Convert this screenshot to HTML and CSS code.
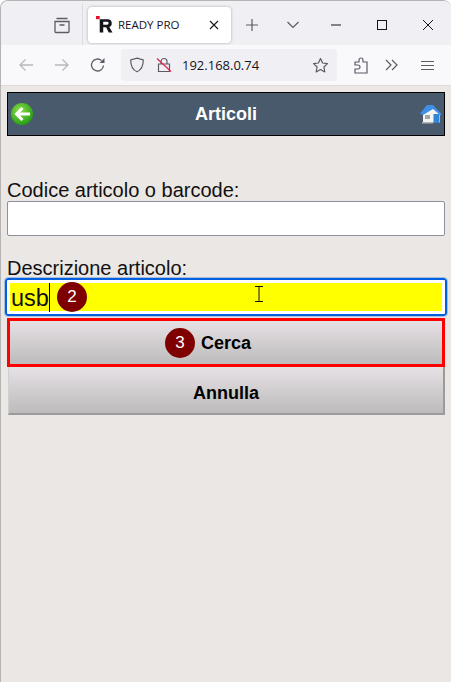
FILE: index.html
```html
<!DOCTYPE html>
<html lang="it">
<head>
  <meta charset="UTF-8">
  <title>READY PRO</title>
  <link rel="stylesheet" href="styles.css">
</head>
<body>
  <div class="window">
    <!-- barra delle schede -->
    <div class="tabbar">
      <div class="tabbar-left">
        <svg class="icon" width="18" height="18" viewBox="0 0 18 18"><path d="M3.500 2.500h11M2 5.500h14v10a1 1 0 0 1-1 1H3a1 1 0 0 1-1-1zM6.500 9h5" fill="none" stroke="#5b5b66" stroke-width="1.300"/></svg>
      </div>
      <div class="tab">
        <svg class="tab-logo" width="17" height="17" viewBox="0 0 16 16"><rect x="0" y="0" width="3.500" height="3" fill="#e8112d"/><path d="M3.500 3h7.500a3.800 3.800 0 0 1 1.500 7.300L15.500 15.500h-3.500l-2.500-4.800H6.800v4.800H3.500zM6.800 5.500v2.800h3.700a1.400 1.400 0 0 0 0-2.800z" fill="#15141a"/></svg>
        <span class="tab-title">READY PRO</span>
        <svg class="tab-close" width="10" height="10" viewBox="0 0 10 10"><path d="M1 1l8 8M9 1l-8 8" stroke="#15141a" stroke-width="1.100"/></svg>
      </div>
      <svg class="tab-new" width="14" height="14" viewBox="0 0 14 14"><path d="M7 1v12M1 7h12" stroke="#5b5b66" stroke-width="1.200"/></svg>
      <svg class="tab-list" width="14" height="10" viewBox="0 0 14 10"><path d="M1.500 2l5.500 5.500L12.500 2" fill="none" stroke="#5b5b66" stroke-width="1.200"/></svg>
      <div class="win-controls">
        <svg width="12" height="12" viewBox="0 0 12 12"><path d="M1 6h10" stroke="#15141a" stroke-width="1"/></svg>
        <svg width="12" height="12" viewBox="0 0 12 12"><rect x="1.500" y="1.500" width="9" height="9" fill="none" stroke="#15141a" stroke-width="1"/></svg>
        <svg width="12" height="12" viewBox="0 0 12 12"><path d="M1 1l10 10M11 1L1 11" stroke="#15141a" stroke-width="1"/></svg>
      </div>
    </div>

    <!-- barra di navigazione -->
    <div class="toolbar">
      <svg class="nav-btn" width="16" height="16" viewBox="0 0 16 16"><path d="M15 8H2M7.500 2.500L2 8l5.500 5.500" fill="none" stroke="#b8b8bd" stroke-width="1.300"/></svg>
      <svg class="nav-btn" width="16" height="16" viewBox="0 0 16 16"><path d="M1 8h13M8.500 2.500L14 8l-5.500 5.500" fill="none" stroke="#b8b8bd" stroke-width="1.300"/></svg>
      <svg class="nav-btn" width="16" height="16" viewBox="0 0 16 16"><path d="M13.500 8.500a6 6 0 1 1-2-5" fill="none" stroke="#5b5b66" stroke-width="1.300"/><path d="M14.500 1v5h-5z" fill="#5b5b66"/></svg>
      <div class="urlbar">
        <svg width="16" height="16" viewBox="0 0 16 16"><path d="M8 1.200l6.300 1.800c0 6-1.800 9.800-6.300 11.800C3.500 12.800 1.700 9 1.700 3z" fill="none" stroke="#5b5b66" stroke-width="1.200"/></svg>
        <svg width="16" height="16" viewBox="0 0 16 16"><path d="M5 7V4.500a3 3 0 0 1 6 0V7M2.500 7h11v7.500h-11z" fill="none" stroke="#5b5b66" stroke-width="1.200"/><path d="M1 1.500l14 13" stroke="#e22850" stroke-width="1.300"/></svg>
        <span class="url">192.168.0.74</span>
        <svg class="url-star" width="17" height="17" viewBox="0 0 17 17"><path d="M8.500 1.500l2.100 4.500 4.900.6-3.600 3.400.9 4.900-4.300-2.400-4.300 2.400.9-4.900L1.500 6.600 6.400 6z" fill="none" stroke="#5b5b66" stroke-width="1.200" stroke-linejoin="round"/></svg>
      </div>
      <div class="toolbar-right">
        <svg width="15" height="17" viewBox="0 0 15 17"><path d="M1 5h4V3a2 2 0 0 1 4 0v2h4v11H1v-4h3a2 2 0 0 0 0-4H1z" fill="none" stroke="#5b5b66" stroke-width="1.200"/></svg>
        <svg width="14" height="12" viewBox="0 0 14 12"><path d="M1 1l5 5-5 5M7 1l5 5-5 5" fill="none" stroke="#5b5b66" stroke-width="1.200"/></svg>
        <svg class="menu-icon" width="13" height="11" viewBox="0 0 13 11"><path d="M0 1.500h13M0 5.500h13M0 9.500h13" stroke="#5b5b66" stroke-width="1.200"/></svg>
      </div>
    </div>

    <!-- contenuto della pagina -->
    <div class="page">
      <div class="header">
        <svg class="header-back" width="24" height="24" viewBox="0 0 24 24">
          <defs><radialGradient id="verde" cx="40%" cy="35%" r="70%"><stop offset="0" stop-color="#8fe04a"/><stop offset="1" stop-color="#1f9a12"/></radialGradient></defs>
          <circle cx="12" cy="12" r="11" fill="url(#verde)"/>
          <path d="M20 12H7M12.500 6L6.500 12l6 6" fill="none" stroke="#fff" stroke-width="3"/>
        </svg>
        <span class="header-title">Articoli</span>
        <svg class="header-home" width="22" height="20" viewBox="0 0 22 20">
          <path d="M3 10l9-7 8 7v8.500H3z" fill="#f4f4f0"/>
          <path d="M0 9.500L7 1h6l8.500 9-1 1.500L13 5 3 11z" fill="#3f8fe6"/>
          <rect x="5" y="11" width="5" height="4" fill="#a5a5a5"/>
          <rect x="13.500" y="10" width="6" height="9" fill="#2f86d8"/>
          <path d="M2 18h11v1.500H2z" fill="#b5b5b0"/>
        </svg>
      </div>

      <div class="field field-code">
        <label class="field-label">Codice articolo o barcode:</label>
        <div class="text-input"></div>
      </div>

      <div class="field field-desc">
        <label class="field-label">Descrizione articolo:</label>
        <div class="text-input-focus">
          <div class="text-input-value">usb<span class="caret"></span></div>
          <span class="step step-2">2</span>
          <svg class="ibeam" width="8" height="16" viewBox="0 0 8 16"><path d="M0 .5h8M0 15.500h8M4 .5v15" stroke="#111" stroke-width="1"/></svg>
        </div>
      </div>

      <div class="btn btn-search">
        <span class="step step-3">3</span>
        <span>Cerca</span>
      </div>
      <div class="btn btn-cancel">Annulla</div>
    </div>
  </div>
</body>
</html>
```

FILE: styles.css
```css
* {
  box-sizing: border-box;
}

html,
body {
  margin: 0;
  padding: 0;
  height: 100%;
  overflow: hidden;
}

body {
  font-family: "Liberation Sans", Arial, sans-serif;
  background-color: #ffffff;
}

.window {
  display: flex;
  flex-direction: column;
  height: 682px;
  border-left: 1px solid #b4b4b4;
  border-top: 1px solid #b4b4b4;
  border-radius: 8px 8px 0 0;
  overflow: hidden;
}

.tabbar {
  display: flex;
  align-items: center;
  height: 44px;
  flex: none;
  background-color: #f0f0f4;
  padding-top: 3px;
}

.tabbar-left {
  display: flex;
  align-items: center;
  justify-content: flex-end;
  width: 82px;
  height: 41px;
  padding-right: 11px;
  border-right: 1px solid #dcdce0;
}

.tab {
  display: flex;
  align-items: center;
  width: 143px;
  height: 36px;
  margin-left: 5px;
  padding: 0 0 0 8px;
  background-color: #ffffff;
  border-radius: 4px;
  box-shadow: 0 0 3px rgba(0, 0, 0, 0.3);
}

.tab-title {
  margin-left: 5px;
  font-family: "Open Sans", sans-serif;
  font-size: 11.500px;
  color: #15141a;
  white-space: nowrap;
}

.tab-close {
  margin-left: 30px;
}

.tab-new {
  margin-left: 14px;
}

.tab-list {
  margin-left: 27px;
}

.win-controls {
  display: flex;
  align-items: center;
  gap: 34px;
  margin-left: 30px;
}

.toolbar {
  display: flex;
  align-items: center;
  height: 41px;
  flex: none;
  padding-left: 17px;
  background-color: #f9f9fb;
  border-bottom: 1px solid #dedbd8;
}

.nav-btn {
  margin-right: 20px;
}

.urlbar {
  display: flex;
  align-items: center;
  gap: 10.500px;
  width: 216px;
  height: 32px;
  margin-left: -5px;
  padding: 0 8px;
  background-color: #f0f0f4;
  border-radius: 4px;
}

.url {
  font-family: "Open Sans", sans-serif;
  font-size: 13px;
  color: #15141a;
  white-space: nowrap;
}

.url-star {
  margin-left: auto;
}

.toolbar-right {
  display: flex;
  align-items: center;
  gap: 16px;
  margin-left: 17px;
}

.menu-icon {
  margin-left: 6px;
}

.page {
  flex: 1;
  padding: 6px 6px 0 6px;
  background-color: #ebe7e4;
}

.header {
  display: flex;
  align-items: center;
  justify-content: space-between;
  height: 44px;
  padding: 0 2px 0 2px;
  background-color: #485a6c;
  border: 1px solid #000000;
}

.header-title {
  margin-left: -2px;
  font-size: 18px;
  font-weight: bold;
  color: #ffffff;
}

.field-label {
  display: block;
  font-size: 20px;
  line-height: 22px;
  color: #111111;
}

.field-code {
  margin-top: 43px;
}

.field-desc {
  margin-top: 21px;
}

.text-input {
  height: 35px;
  background-color: #ffffff;
  border: 1px solid #8f8f9d;
  border-radius: 2px;
}

.text-input-focus {
  position: relative;
  height: 38px;
  margin: -1px -2px 0;
  padding: 3px 3px;
  background-color: #ffffff;
  border: 2px solid #0060df;
  border-radius: 3px;
  outline: 1px solid #a9bedd;
}

.text-input-value {
  height: 28px;
  padding-left: 1px;
  background-color: #ffff00;
  font-size: 23.500px;
  line-height: 30px;
  color: #111111;
}

.caret {
  display: inline-block;
  width: 1px;
  height: 29px;
  vertical-align: top;
  background-color: #000000;
}

.step {
  display: flex;
  align-items: center;
  justify-content: center;
  width: 30px;
  height: 30px;
  flex: none;
  background-color: #7f0000;
  border-radius: 50%;
  font-size: 17px;
  font-weight: normal;
  color: #ffffff;
}

.step-2 {
  position: absolute;
  left: 50px;
  top: 2px;
}

.step-3 {
  position: absolute;
  left: 155px;
  top: 7px;
}

.ibeam {
  position: absolute;
  left: 248px;
  top: 6px;
}

.btn {
  display: flex;
  align-items: center;
  justify-content: center;
  font-size: 18px;
  font-weight: bold;
  color: #000000;
  background: linear-gradient(#e6e1e5, #bdbbbb);
}

.btn-search {
  position: relative;
  height: 49px;
  margin-top: 2px;
  padding-top: 2px;
  border: 3px solid #ff0000;
}

.btn-cancel {
  height: 48px;
  margin-left: 1px;
  padding-top: 6px;
  border-right: 2px solid #9b9b9b;
  border-bottom: 2px solid #9b9b9b;
  border-left: 1px solid #cfcfcf;
}
```
